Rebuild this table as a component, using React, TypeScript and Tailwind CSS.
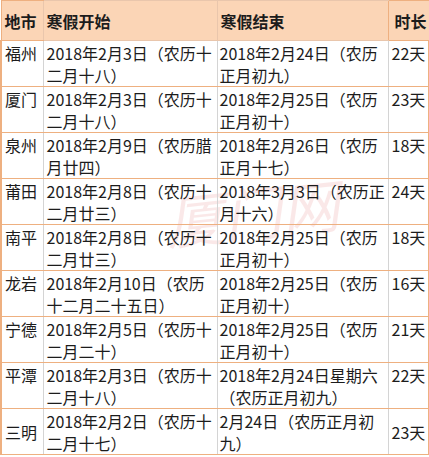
const rows: { city: string; start: [string, string]; end: [string, string]; days: string; center?: boolean }[] = [
  { city: '福州', start: ['2018年2月3日（农历十', '二月十八）'], end: ['2018年2月24日（农历', '正月初九）'], days: '22天' },
  { city: '厦门', start: ['2018年2月3日（农历十', '二月十八）'], end: ['2018年2月25日（农历', '正月初十）'], days: '23天' },
  { city: '泉州', start: ['2018年2月9日（农历腊', '月廿四）'], end: ['2018年2月26日（农历', '正月十七）'], days: '18天' },
  { city: '莆田', start: ['2018年2月8日（农历十', '二月廿三）'], end: ['2018年3月3日（农历正', '月十六）'], days: '24天' },
  { city: '南平', start: ['2018年2月8日（农历十', '二月廿三）'], end: ['2018年2月25日（农历', '正月初十）'], days: '18天' },
  { city: '龙岩', start: ['2018年2月10日（农历', '十二月二十五日）'], end: ['2018年2月25日（农历', '正月初十）'], days: '16天' },
  { city: '宁德', start: ['2018年2月5日（农历十', '二月二十）'], end: ['2018年2月25日（农历', '正月初十）'], days: '21天' },
  { city: '平潭', start: ['2018年2月3日（农历十', '二月十八）'], end: ['2018年2月24日星期六', '（农历正月初九）'], days: '22天' },
  { city: '三明', start: ['2018年2月2日（农历十', '二月十七）'], end: ['2月24日（农历正月初', '九）'], days: '23天', center: true },
];

export default function App() {
  return (
    <div
      className="relative w-[429px] h-[457px] bg-white overflow-hidden text-[#1c1c1c]"
      style={{ fontFamily: '"Noto Sans CJK SC", "Noto Sans", sans-serif' }}
    >
      {/* watermark, behind the text */}
      <div
        className="absolute left-[165px] top-[182px] text-[58px] leading-none italic text-[#e46a6a] opacity-15 -rotate-6 pointer-events-none select-none"
        style={{ fontFamily: '"Noto Sans CJK SC", serif' }}
      >
        厦门网
      </div>

      <table className="relative border-collapse table-fixed w-[428px] text-[16px] leading-[22px]">
        <colgroup>
          <col className="w-[42px]" />
          <col className="w-[174px]" />
          <col className="w-[171px]" />
          <col className="w-[41px]" />
        </colgroup>
        <thead>
          <tr className="h-[40px] bg-[#fbd5b6]">
            <th className="p-0 text-left font-bold pl-[3px] border-t border-b border-l border-[#eeb080]">地市</th>
            <th className="p-0 text-left font-bold pl-[3px] border-t border-b border-l border-[#e9c6ac]">寒假开始</th>
            <th className="p-0 text-left font-bold pl-[3px] border-t border-b border-l border-[#e9c6ac]">寒假结束</th>
            <th className="p-0 text-right font-bold pr-[2px] border-t border-b border-l border-r border-[#eeb080]">时长</th>
          </tr>
        </thead>
        <tbody>
          {rows.map((r) => (
            <tr key={r.city} className="h-[46px]">
              <td className={`p-0 pl-[3px] border-l-2 border-b border-[#eeb080] border-r-[#d4d4d4] border-r whitespace-nowrap ${r.center ? 'align-middle' : 'align-top pt-px'}`}>
                {r.city}
              </td>
              <td className="p-0 pt-px pl-[3px] border-r border-b border-[#eeb080] border-r-[#d4d4d4] align-top whitespace-nowrap">
                {r.start[0]}
                <br />
                {r.start[1]}
              </td>
              <td className="p-0 pt-px pl-[2px] border-r border-b border-[#eeb080] border-r-[#d4d4d4] align-top whitespace-nowrap">
                {r.end[0]}
                <br />
                {r.end[1]}
              </td>
              <td className={`p-0 pl-[3px] border-r-2 border-b border-[#eeb080] whitespace-nowrap ${r.center ? 'align-middle' : 'align-top pt-px'}`}>
                {r.days}
              </td>
            </tr>
          ))}
        </tbody>
      </table>
    </div>
  );
}
